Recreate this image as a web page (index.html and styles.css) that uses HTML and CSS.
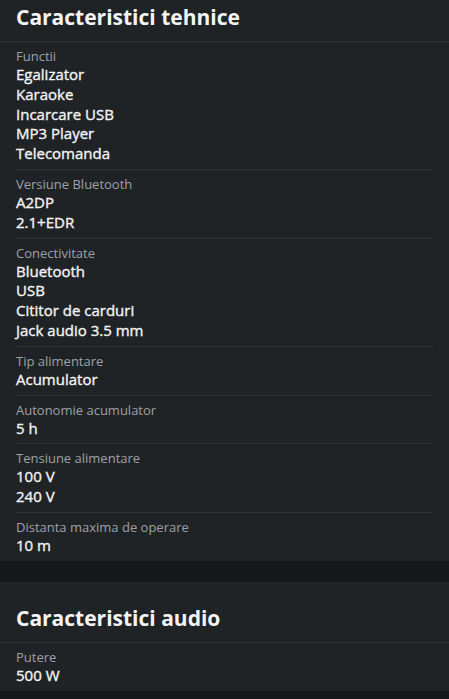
FILE: index.html
```html
<!doctype html>
<html lang="ro">
<head>

    <title>Caracteristici</title>

    <link rel="stylesheet" href="styles.css">

</head>
<body>

    <!-- tehnice -->
    <div class="Card Card--first">
        <h2 class="Card-title">Caracteristici tehnice</h2>
        <div class="Card-list">
            <div class="Spec">
                <div class="Spec-label">Functii</div>
                <div class="Spec-value">Egalizator</div>
                <div class="Spec-value">Karaoke</div>
                <div class="Spec-value">Incarcare USB</div>
                <div class="Spec-value">MP3 Player</div>
                <div class="Spec-value">Telecomanda</div>
            </div>
            <div class="Spec">
                <div class="Spec-label">Versiune Bluetooth</div>
                <div class="Spec-value">A2DP</div>
                <div class="Spec-value">2.1+EDR</div>
            </div>
            <div class="Spec">
                <div class="Spec-label">Conectivitate</div>
                <div class="Spec-value">Bluetooth</div>
                <div class="Spec-value">USB</div>
                <div class="Spec-value">Cititor de carduri</div>
                <div class="Spec-value">Jack audio 3.5 mm</div>
            </div>
            <div class="Spec">
                <div class="Spec-label">Tip alimentare</div>
                <div class="Spec-value">Acumulator</div>
            </div>
            <div class="Spec">
                <div class="Spec-label">Autonomie acumulator</div>
                <div class="Spec-value">5 h</div>
            </div>
            <div class="Spec">
                <div class="Spec-label">Tensiune alimentare</div>
                <div class="Spec-value">100 V</div>
                <div class="Spec-value">240 V</div>
            </div>
            <div class="Spec">
                <div class="Spec-label">Distanta maxima de operare</div>
                <div class="Spec-value">10 m</div>
            </div>
        </div>
    </div>

    <!-- audio -->
    <div class="Card">
        <h2 class="Card-title">Caracteristici audio</h2>
        <div class="Card-list">
            <div class="Spec">
                <div class="Spec-label">Putere</div>
                <div class="Spec-value">500 W</div>
            </div>
        </div>
    </div>

</body>
</html>
```

FILE: styles.css
```css
*, *:before, *:after {
    box-sizing: border-box;
    margin: 0;
    padding: 0;
}

* {
    font-family: "Open Sans", "Noto Sans", sans-serif;
}

html {
    background: #151719;
}

body {
    display: flex;
    flex-direction: column;
    gap: 21px;
}

.Card {
    background: #202326;
}

.Card-title {
    padding: 20px 16px 8px;
    border-bottom: 1px solid #2c2f33;
    color: #f4f4f4;
    font-size: 21px;
    font-weight: 700;
    line-height: 32px;
}

.Card--first .Card-title {
    padding-top: 1px;
}

.Card-list {
    padding: 0 16px;
}

.Spec {
    padding: 5px 0 5px;
    border-bottom: 1px solid #2c2f33;
}

.Spec:last-child {
    padding-bottom: 5px;
    border-bottom: none;
}

.Spec-label {
    color: #9da1a6;
    font-size: 13px;
    line-height: 18px;
}

.Spec-value {
    color: #f4f4f4;
    font-size: 15px;
    line-height: 19.8px;
    -webkit-text-stroke: 0.35px #f4f4f4;
}
```
